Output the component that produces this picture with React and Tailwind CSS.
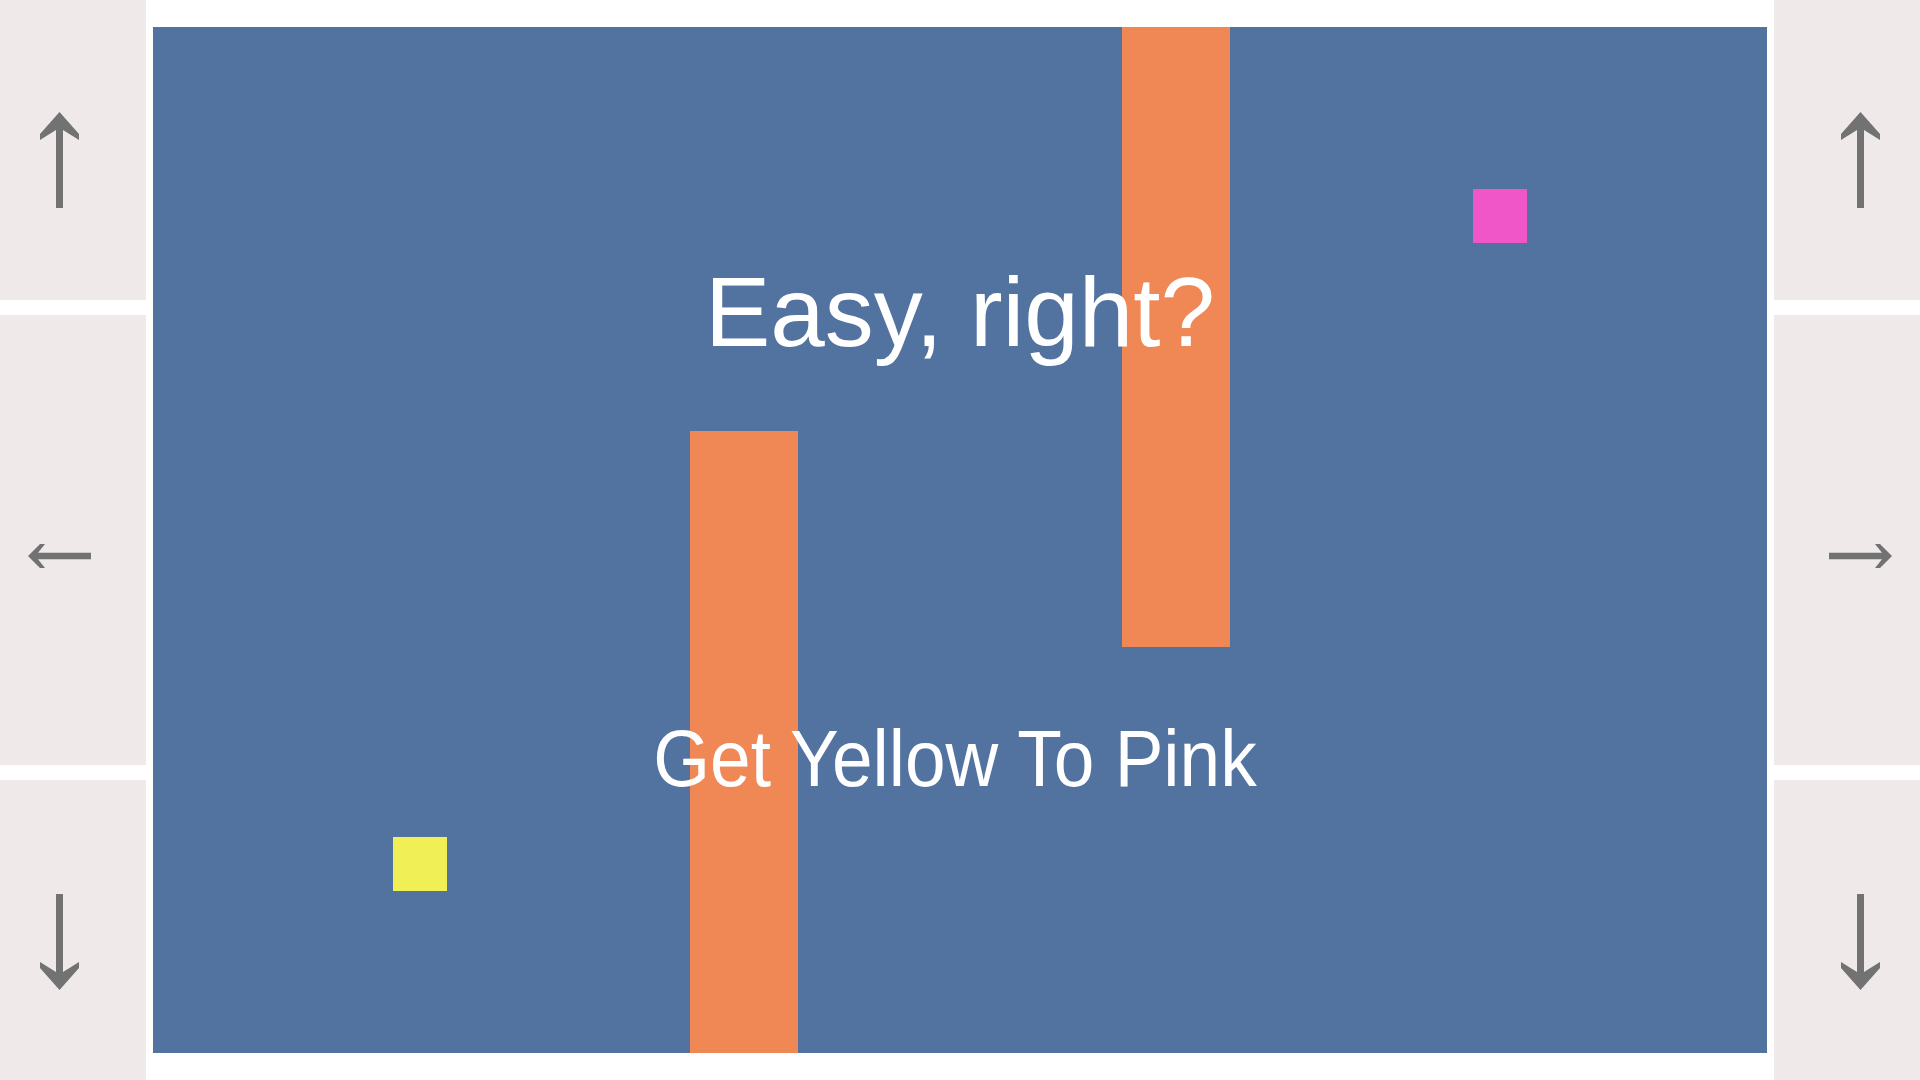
const ArrowUp = () => (
  <svg width="39" height="96" viewBox="0 0 39 96" className="fill-[#727272]">
    <polygon points="19.5,0 39,22 39,28 23,18 23,96 16,96 16,18 0,28 0,22" />
  </svg>
);

const ArrowDown = () => (
  <svg width="39" height="96" viewBox="0 0 39 96" className="fill-[#727272]">
    <polygon points="19.5,96 39,74 39,68 23,78 23,0 16,0 16,78 0,68 0,74" />
  </svg>
);

const ArrowLeft = () => (
  <svg width="63" height="24" viewBox="0 0 63 24" className="fill-[#727272]">
    <polygon points="0,12 12,0 17,0 10,8.7 63,8.7 63,15.3 10,15.3 17,24 12,24" />
  </svg>
);

const ArrowRight = () => (
  <svg width="63" height="24" viewBox="0 0 63 24" className="fill-[#727272]">
    <polygon points="63,12 51,0 46,0 53,8.7 0,8.7 0,15.3 53,15.3 46,24 51,24" />
  </svg>
);

function Controls({ side }) {
  const left = side === "left";
  return (
    <div className="w-[146px] shrink-0 flex flex-col gap-[15px] h-full">
      <button className={`h-[300px] bg-[#efe9e9] flex items-start pt-[112px] ${left ? "pl-[40px]" : "pl-[67px]"}`}>
        <ArrowUp />
      </button>
      <button className={`flex-1 bg-[#efe9e9] flex items-start pt-[229px] ${left ? "pl-[28px]" : "pl-[55px]"}`}>
        {left ? <ArrowLeft /> : <ArrowRight />}
      </button>
      <button className={`h-[300px] bg-[#efe9e9] flex items-start pt-[114px] ${left ? "pl-[40px]" : "pl-[67px]"}`}>
        <ArrowDown />
      </button>
    </div>
  );
}

export default function App() {
  return (
    <div className="w-[1920px] h-[1080px] bg-white flex gap-[7px] overflow-hidden font-['Liberation_Sans',Arial,sans-serif]">
      <Controls side="left" />

      {/* game board */}
      <div className="flex-1 my-[27px] bg-[#5272a0] relative overflow-hidden">
        <div className="absolute left-[969px] top-0 w-[108px] h-[620px] bg-[#f08856]" />
        <div className="absolute left-[537px] top-[404px] w-[108px] bottom-0 bg-[#f08856]" />
        <div className="absolute left-[1320px] top-[162px] w-[54px] h-[54px] bg-[#f056c8]" />
        <div className="absolute left-[240px] top-[810px] w-[54px] h-[54px] bg-[#f0f056]" />

        <div className="absolute left-0 right-0 top-[236px] text-center text-white text-[98px] leading-none">
          Easy, right?
        </div>
        <div className="absolute left-0 right-[10px] top-[694px] text-center text-white text-[73px] leading-none scale-y-110">
          Get Yellow To Pink
        </div>
      </div>

      <Controls side="right" />
    </div>
  );
}
